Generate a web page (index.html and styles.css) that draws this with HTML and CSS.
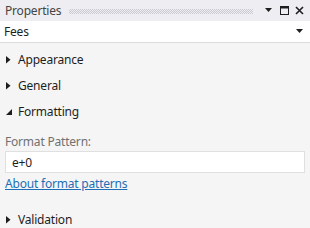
FILE: index.html
```html
<!DOCTYPE html>
<html lang="en">
<head>
  <meta charset="UTF-8">
  <title>Properties</title>
  <link rel="stylesheet" href="styles.css">
</head>
<body>
  <div class="panel">
    <div class="title-bar">
      <span class="title">Properties</span>
      <span class="grip"></span>
      <span class="tool-btn">
        <svg width="8" height="5" viewBox="0 0 8 5"><path d="M0 0h7L3.5 4z" fill="#1e1e1e"/></svg>
      </span>
      <span class="tool-btn">
        <svg width="9" height="9" viewBox="0 0 9 9"><rect x="0.5" y="0.5" width="8" height="8" fill="none" stroke="#1e1e1e"/><rect x="0" y="0" width="9" height="2.5" fill="#1e1e1e"/></svg>
      </span>
      <span class="tool-btn">
        <svg width="9" height="9" viewBox="0 0 9 9"><path d="M1 1l7 7M8 1l-7 7" stroke="#1e1e1e" stroke-width="1.6"/></svg>
      </span>
    </div>

    <div class="combo">
      <span>Fees</span>
      <svg width="8" height="5" viewBox="0 0 8 5"><path d="M0 0h7L3.5 4z" fill="#1e1e1e"/></svg>
    </div>

    <div class="category first">
      <svg class="arrow" width="6" height="8" viewBox="0 0 6 8"><path d="M0 0v7.5L4.5 3.75z" fill="#1e1e1e"/></svg>
      <span>Appearance</span>
    </div>
    <div class="category">
      <svg class="arrow" width="6" height="8" viewBox="0 0 6 8"><path d="M0 0v7.5L4.5 3.75z" fill="#1e1e1e"/></svg>
      <span>General</span>
    </div>
    <div class="category">
      <svg class="arrow" width="6" height="8" viewBox="0 0 6 8"><path d="M6 1v6H0z" fill="#1e1e1e"/></svg>
      <span>Formatting</span>
    </div>

    <div class="section">
      <label class="field-label" for="pattern">Format Pattern:</label>
      <input class="field" id="pattern" type="text" value="e+0">
      <a class="help-link" href="#">About format patterns</a>
    </div>

    <div class="category last">
      <svg class="arrow" width="6" height="8" viewBox="0 0 6 8"><path d="M0 0v7.5L4.5 3.75z" fill="#1e1e1e"/></svg>
      <span>Validation</span>
    </div>
  </div>
</body>
</html>
```

FILE: styles.css
```css
body {
  margin: 0;
  font-family: "Noto Sans", "Open Sans", sans-serif;
  font-size: 12px;
  letter-spacing: -0.2px;
  color: #1e1e1e;
  background-color: #f5f5f5;
}

.panel {
  width: 310px;
  height: 228px;
  overflow: hidden;
}

.title-bar {
  display: flex;
  align-items: center;
  height: 21px;
  padding: 0 4px 0 5px;
  background-color: #eeeef2;
}

.title {
  color: #444;
}

.grip {
  flex: 1;
  height: 5px;
  margin: 1px 8px 0 8px;
  background-image: conic-gradient(#cacad2 25%, transparent 0 50%, #cacad2 0 75%, transparent 0);
  background-size: 2px 2px;
}

.tool-btn {
  display: flex;
  align-items: center;
  justify-content: center;
  width: 14px;
  height: 14px;
  margin-left: 1px;
}

.combo {
  display: flex;
  align-items: center;
  justify-content: space-between;
  height: 21px;
  padding: 0 6px 0 4px;
  background: #ffffff;
  border-bottom: 1px solid #dcdcdc;
}

.category {
  display: flex;
  align-items: center;
  height: 25px;
  padding-left: 6px;
  margin-top: 1px;
}

.category.first {
  margin-top: 4px;
}

.category .arrow {
  margin-right: 6px;
}

.section {
  padding: 9px 5px 0 5px;
}

.field-label {
  display: block;
  color: #717171;
  margin-bottom: 1px;
}

.field {
  display: block;
  box-sizing: border-box;
  width: 100%;
  height: 22px;
  padding: 0 6px;
  border: 1px solid #e0e0e0;
  background: #ffffff;
  font-family: inherit;
  font-size: 12px;
  letter-spacing: inherit;
  color: #1e1e1e;
  outline: none;
}

.help-link {
  display: inline-block;
  margin-top: 2px;
  color: #1e6fb5;
  text-decoration: underline;
}

.category.last {
  margin-top: 15px;
}
```
